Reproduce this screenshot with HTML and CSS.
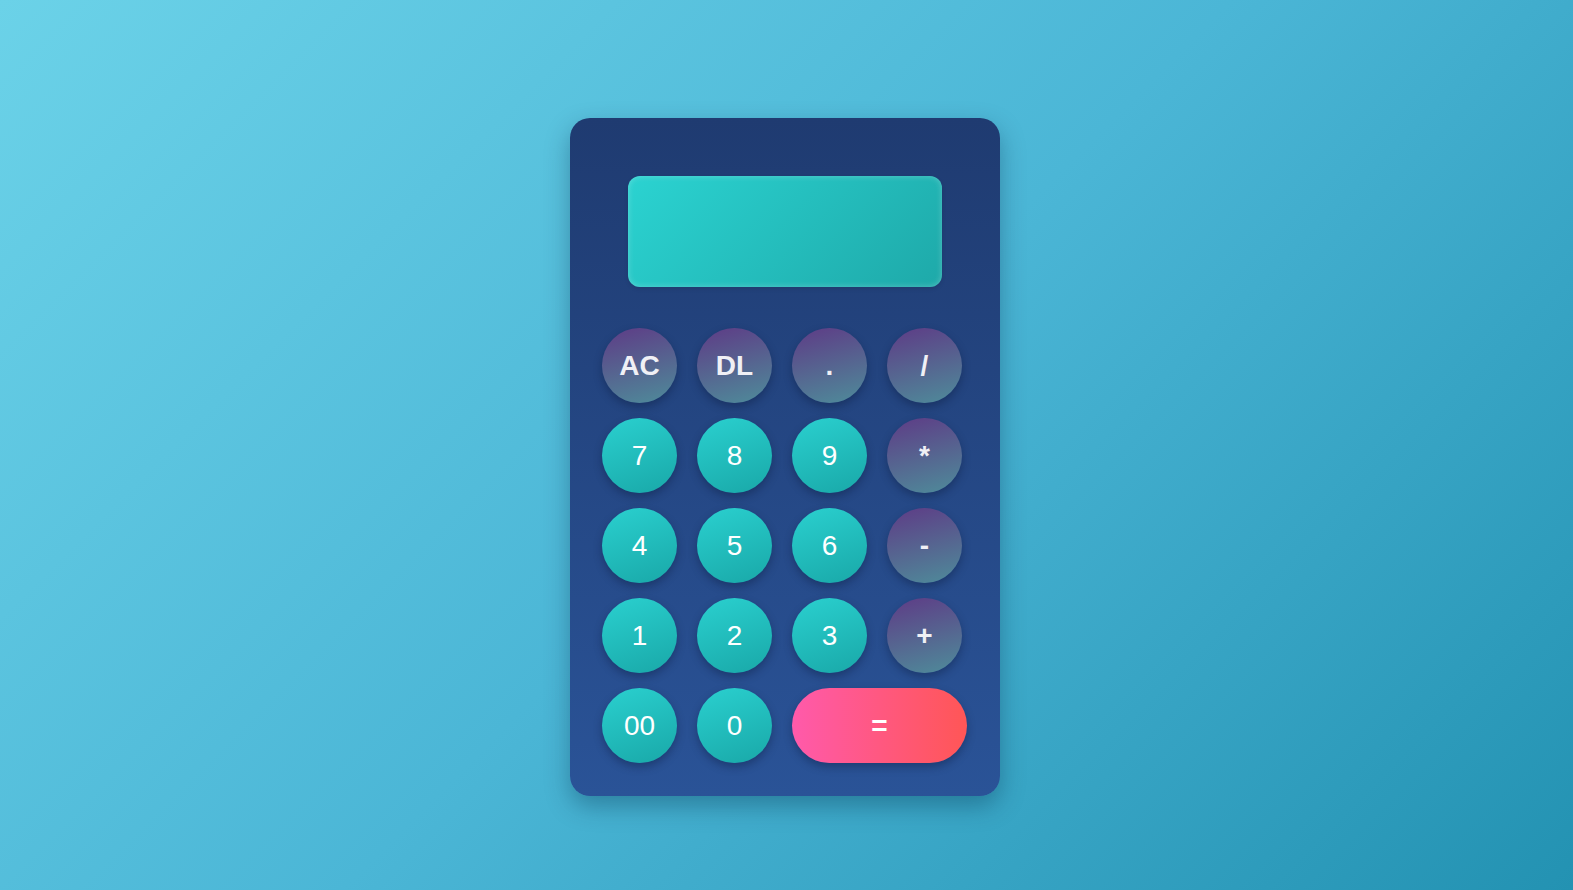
FILE: index.html
```html
<!DOCTYPE html>
<html>
<head>
<meta charset="utf-8">
<link rel="stylesheet" href="styles.css">
</head>
<body>
<div class="calc">
  <div class="display"></div>
  <div class="keys">
    <button class="key op">AC</button>
    <button class="key op">DL</button>
    <button class="key op">.</button>
    <button class="key op">/</button>
    <button class="key num">7</button>
    <button class="key num">8</button>
    <button class="key num">9</button>
    <button class="key op">*</button>
    <button class="key num">4</button>
    <button class="key num">5</button>
    <button class="key num">6</button>
    <button class="key op">-</button>
    <button class="key num">1</button>
    <button class="key num">2</button>
    <button class="key num">3</button>
    <button class="key op">+</button>
    <button class="key num">00</button>
    <button class="key num">0</button>
    <button class="key eq">=</button>
  </div>
</div>
</body>
</html>
```
FILE: styles.css
```css
html, body {
  margin: 0;
  height: 100%;
}
body {
  background: linear-gradient(135deg, #6bd2e8 0%, #4bb6d6 50%, #2392b2 100%);
  font-family: "Liberation Sans", Arial, sans-serif;
  display: flex;
  justify-content: center;
  align-items: flex-start;
  padding-top: 118px;
  padding-right: 3px;
  box-sizing: border-box;
}
.calc {
  width: 430px;
  height: 678px;
  box-sizing: border-box;
  padding: 58px 33px 0 32px;
  border-radius: 20px;
  background: linear-gradient(180deg, #1f3b71 0%, #2a5397 100%);
  box-shadow: 0 10px 25px rgba(0, 40, 70, 0.35);
  display: flex;
  flex-direction: column;
  align-items: center;
}
.display {
  width: 314px;
  height: 111px;
  border-radius: 12px;
  background: linear-gradient(135deg, #2bd3d1 0%, #1ea9a9 100%);
  box-shadow: inset 0 0 6px rgba(255, 255, 255, 0.25), 0 2px 4px rgba(0, 0, 0, 0.1);
  margin-bottom: 41px;
}
.keys {
  align-self: stretch;
  display: grid;
  grid-template-columns: repeat(4, 75px);
  grid-auto-rows: 75px;
  column-gap: 20px;
  row-gap: 15px;
}
.key {
  border: none;
  border-radius: 40px;
  width: 75px;
  height: 75px;
  padding: 0;
  color: #fff;
  font-family: "Liberation Sans", Arial, sans-serif;
  font-size: 28px;
  box-shadow: 0 4px 8px rgba(10, 20, 50, 0.35);
  display: flex;
  align-items: center;
  justify-content: center;
}
.num {
  background: linear-gradient(160deg, #2ad0cf 0%, #19a8a8 100%);
}
.op {
  background: linear-gradient(165deg, #5e3b86 0%, #4e8c9a 100%);
  font-weight: bold;
  color: #f0f0f5;
}
.eq {
  grid-column: span 2;
  width: 175px;
  background: linear-gradient(90deg, #ff5aab 0%, #ff5656 100%);
  font-weight: bold;
}
```
